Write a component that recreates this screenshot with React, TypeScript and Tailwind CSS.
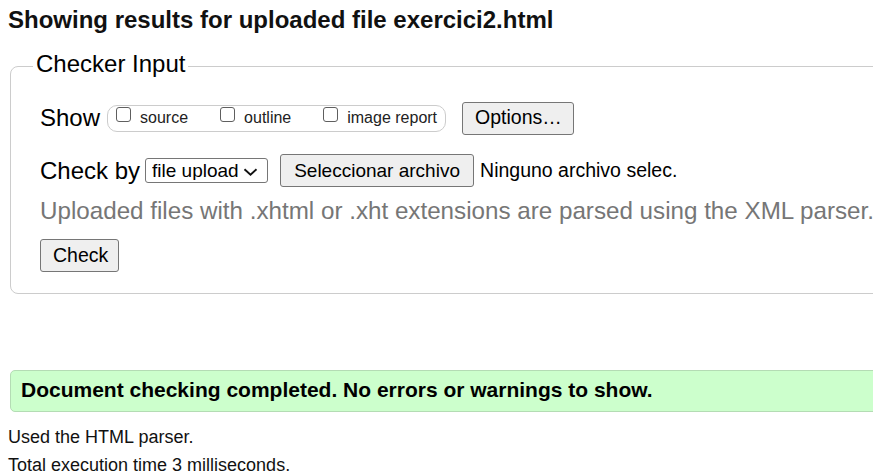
import React from 'react';

const OPTIONS = ['source', 'outline', 'image report'];

const Checkbox: React.FC<{ label: string }> = ({ label }) => (
  <label className="flex items-center">
    <span className="block shrink-0 w-[15px] h-[15px] mb-[8px] border border-[#5f5f5f] rounded-[3px] bg-white" />
    <span className="ml-[9px] text-[16px] leading-[18px] text-[#222]">{label}</span>
  </label>
);

const Button: React.FC<{ children: React.ReactNode; className?: string }> = ({ children, className }) => (
  <button
    className={`h-[33px] px-[12px] bg-[#efefef] border border-[#767676] rounded-[3px] text-[19.5px] leading-none text-black whitespace-nowrap ${className || ''}`}
  >
    {children}
  </button>
);

export default function App() {
  return (
    <div className="w-[873px] h-[476px] overflow-hidden bg-white text-black font-['Liberation_Sans',Arial,sans-serif]">
      <div className="w-[940px] pl-2">
        <h2 className="mt-[6px] text-[24px] leading-[28px] font-bold text-[#111]">
          Showing results for uploaded file exercici2.html
        </h2>

        <fieldset className="mt-[16px] ml-[2px] border border-[#cccccc] rounded-[8px] px-[22px] pt-[20px] pb-[21px]">
          <legend className="px-[3px] pb-[4px] text-[24px] leading-[28px]">Checker Input</legend>

          <div className="pl-[7px]">
            <div className="flex items-center h-[32px]">
              <span className="text-[24px] leading-[28px]">Show</span>
              <div className="ml-[7px] flex items-center h-[27px] pl-[8px] pr-[8px] gap-[32px] border border-[#cccccc] rounded-[10px]">
                {OPTIONS.map(o => <Checkbox key={o} label={o} />)}
              </div>
              <Button className="ml-[16px] h-[32px] w-[112px]">Options…</Button>
            </div>

            <div className="flex items-center h-[33px] mt-[20px]">
              <span className="text-[24px] leading-[28px]">Check by</span>
              <div className="relative ml-[5px]">
                <select className="appearance-none w-[123px] h-[25px] pl-[6px] border border-[#767676] rounded-[3px] bg-white text-[19px] leading-none text-black">
                  <option>file upload</option>
                </select>
                <svg className="absolute right-[10px] top-[10px] pointer-events-none" width="15" height="8" viewBox="0 0 15 8">
                  <path d="M1.5 1.2 L7.5 6.6 L13.5 1.2" fill="none" stroke="#111" strokeWidth="1.9" />
                </svg>
              </div>
              <Button className="ml-[12px] w-[194px] text-[19px]">Seleccionar archivo</Button>
              <span className="ml-[6px] text-[19.5px]">Ninguno archivo selec.</span>
            </div>

            <p className="mt-[10px] text-[24.2px] leading-[28px] text-[#767676] whitespace-nowrap">
              Uploaded files with .xhtml or .xht extensions are parsed using the XML parser.
            </p>

            <div className="mt-[14px]">
              <Button className="w-[79px]">Check</Button>
            </div>
          </div>
        </fieldset>

        <div className="mt-[76px] ml-[2px] h-[42px] border border-[#b4dcb4] rounded-[5px] bg-[#ccffcc] pl-[10px] pt-[7px]">
          <p className="text-[21px] leading-[24px] font-bold text-black">
            Document checking completed. No errors or warnings to show.
          </p>
        </div>

        <div className="mt-[11px] text-[18px] leading-[28px] text-[#111]">
          <p>Used the HTML parser.</p>
          <p>Total execution time 3 milliseconds.</p>
        </div>
      </div>
    </div>
  );
}
